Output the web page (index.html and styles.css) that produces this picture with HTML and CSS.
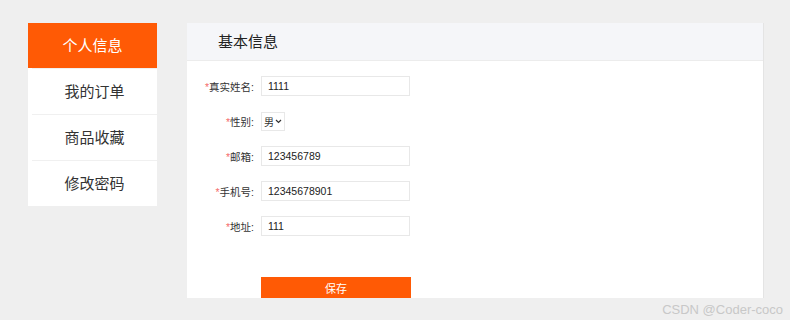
FILE: index.html
```html
<!DOCTYPE html>
<html lang="zh-CN">
<head>
    <meta charset="UTF-8">
    <meta name="viewport" content="width=device-width, initial-scale=1.0">
    <title>个人中心</title>
    <link rel="stylesheet" href="styles.css">
</head>
<body>
    <div class="sidebar">
        <div class="nav-item active">个人信息</div>
        <div class="nav-item">我的订单</div>
        <div class="nav-item">商品收藏</div>
        <div class="nav-item">修改密码</div>
    </div>
    <div class="panel">
        <div class="panel-head">基本信息</div>
        <form class="info-form">
            <div class="form-row">
                <label><span class="req">*</span>真实姓名:</label>
                <input type="text" value="1111">
            </div>
            <div class="form-row">
                <label><span class="req">*</span>性别:</label>
                <div class="gender">男<svg width="7" height="5" viewBox="0 0 7 5"><path d="M1 1 L3.5 3.5 L6 1" fill="none" stroke="#333" stroke-width="1.2"/></svg></div>
            </div>
            <div class="form-row">
                <label><span class="req">*</span>邮箱:</label>
                <input type="text" value="123456789">
            </div>
            <div class="form-row">
                <label><span class="req">*</span>手机号:</label>
                <input type="text" value="12345678901">
            </div>
            <div class="form-row">
                <label><span class="req">*</span>地址:</label>
                <input type="text" value="111">
            </div>
            <button type="button" class="save-btn">保存</button>
        </form>
    </div>
    <div class="watermark">CSDN @Coder-coco</div>
</body>
</html>
```

FILE: styles.css
```css
body {
    margin: 0;
    padding: 23px 0 0 28px;
    background: #efefef;
    font-family: "Liberation Sans", "Noto Sans CJK SC", sans-serif;
    display: flex;
    align-items: flex-start;
    gap: 30px;
    height: 320px;
    box-sizing: border-box;
    overflow: hidden;
}
.sidebar {
    width: 129px;
    background: #fff;
}
.nav-item {
    height: 45px;
    line-height: 45px;
    text-align: center;
    font-size: 15px;
    color: #333;
    border-top: 1px solid #f0f0f0;
    margin-left: 4px;
}
.nav-item.active {
    background: #ff5a05;
    color: #fff;
    border-top: none;
    margin-left: 0;
}
.panel {
    width: 576px;
    height: 275px;
    background: #fff;
    border-right: 1px solid #e4e4e4;
}
.panel-head {
    height: 37px;
    line-height: 37px;
    padding-left: 31px;
    background: #f5f6f9;
    border-bottom: 1px solid #ececec;
    font-size: 15px;
    color: #222;
}
.info-form {
    padding-top: 15px;
}
.form-row {
    display: flex;
    align-items: center;
    height: 20px;
    margin-bottom: 15px;
}
.form-row label {
    width: 69px;
    margin-right: 5px;
    padding-right: 2px;
    box-sizing: border-box;
    text-align: right;
    font-size: 10.5px;
    color: #333;
}
.req {
    color: #f56c6c;
}
.form-row input {
    width: 149px;
    height: 20px;
    box-sizing: border-box;
    border: 1px solid #e8e8e8;
    padding: 0 6px;
    font-family: "Liberation Sans", "Noto Sans CJK SC", sans-serif;
    font-size: 10.5px;
    color: #222;
    outline: none;
}
.gender {
    width: 24px;
    height: 19px;
    box-sizing: border-box;
    border: 1px solid #e8e8e8;
    display: flex;
    align-items: center;
    gap: 1px;
    padding-left: 2px;
    font-size: 10px;
    color: #333;
}
.save-btn {
    display: block;
    margin: 41px 0 0 74px;
    width: 150px;
    height: 21px;
    border: none;
    background: #ff5a05;
    color: #fff;
    font-family: "Liberation Sans", "Noto Sans CJK SC", sans-serif;
    font-size: 11px;
    padding: 0;
}
.watermark {
    position: absolute;
    right: 7px;
    bottom: 3px;
    font-size: 13px;
    color: #c8c8c8;
}
```
